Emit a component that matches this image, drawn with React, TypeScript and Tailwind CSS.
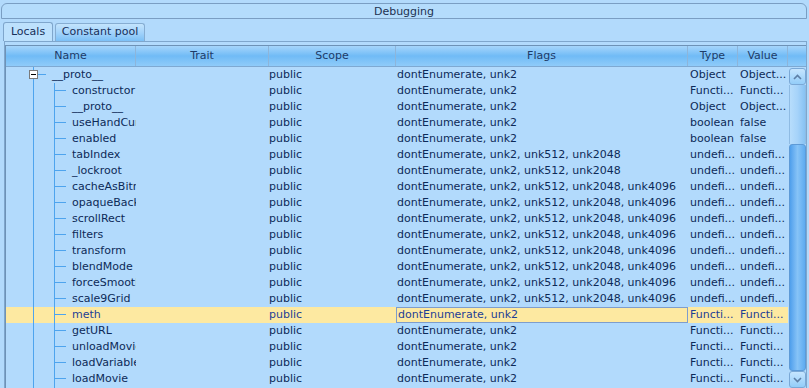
import React from 'react';

type Row = {
    name: string;
    root?: boolean;
    flags: string;
    type: string;
    value: string;
};

const F2 = 'dontEnumerate, unk2';
const F2048 = 'dontEnumerate, unk2, unk512, unk2048';
const F4096 = 'dontEnumerate, unk2, unk512, unk2048, unk4096';

const rows: Row[] = [
    { name: '__proto__', root: true, flags: F2, type: 'Object', value: 'Object...' },
    { name: 'constructor', flags: F2, type: 'Functi...', value: 'Functi...' },
    { name: '__proto__', flags: F2, type: 'Object', value: 'Object...' },
    { name: 'useHandCursor', flags: F2, type: 'boolean', value: 'false' },
    { name: 'enabled', flags: F2, type: 'boolean', value: 'false' },
    { name: 'tabIndex', flags: F2048, type: 'undefi...', value: 'undefi...' },
    { name: '_lockroot', flags: F2048, type: 'undefi...', value: 'undefi...' },
    { name: 'cacheAsBitmap', flags: F4096, type: 'undefi...', value: 'undefi...' },
    { name: 'opaqueBackground', flags: F4096, type: 'undefi...', value: 'undefi...' },
    { name: 'scrollRect', flags: F4096, type: 'undefi...', value: 'undefi...' },
    { name: 'filters', flags: F4096, type: 'undefi...', value: 'undefi...' },
    { name: 'transform', flags: F4096, type: 'undefi...', value: 'undefi...' },
    { name: 'blendMode', flags: F4096, type: 'undefi...', value: 'undefi...' },
    { name: 'forceSmoothing', flags: F4096, type: 'undefi...', value: 'undefi...' },
    { name: 'scale9Grid', flags: F4096, type: 'undefi...', value: 'undefi...' },
    { name: 'meth', flags: F2, type: 'Functi...', value: 'Functi...' },
    { name: 'getURL', flags: F2, type: 'Functi...', value: 'Functi...' },
    { name: 'unloadMovie', flags: F2, type: 'Functi...', value: 'Functi...' },
    { name: 'loadVariables', flags: F2, type: 'Functi...', value: 'Functi...' },
    { name: 'loadMovie', flags: F2, type: 'Functi...', value: 'Functi...' },
    { name: 'loadVariablesNum', flags: F2, type: 'Functi...', value: 'Functi...' },
];

const SELECTED = 15;
const LINE = '#4ea4ee';

function TreeGutter({ root }: { root?: boolean }) {
    // tree lines for the name column, cell starts at x=6
    if (root) {
        return (
            <svg width="46" height="16" className="shrink-0">
                <line x1="27.5" y1="0" x2="27.5" y2="16" stroke={LINE} />
                <line x1="32" y1="7.5" x2="40" y2="7.5" stroke={LINE} />
                <rect x="23.5" y="3.5" width="8" height="8" fill="#ffffff" stroke="#7a7a7a" />
                <line x1="25" y1="7.5" x2="30" y2="7.5" stroke="#000000" />
            </svg>
        );
    }
    return (
        <svg width="66" height="16" className="shrink-0">
            <line x1="27.5" y1="0" x2="27.5" y2="16" stroke={LINE} />
            <line x1="48.5" y1="0" x2="48.5" y2="16" stroke={LINE} />
            <line x1="48" y1="7.5" x2="60" y2="7.5" stroke={LINE} />
        </svg>
    );
}

function HeaderCell({ label, w }: { label: string; w: string }) {
    return (
        <div className={`${w} shrink-0 border-r border-[#8db5da] flex items-center justify-center`}>
            {label}
        </div>
    );
}

export default function App() {
    return (
        <div className="w-[809px] h-[388px] overflow-hidden bg-[#b2dafc] font-['DejaVu_Sans',sans-serif] text-[11px] text-[#0d2a58]">
            {/* Title */}
            <div className="ml-[1px] mr-[2px] mt-[3px] h-[16px] rounded-t-[6px] border border-[#7a9ec3] bg-[#b4dcfc] flex items-center justify-center text-[#1e3352] leading-none">
                Debugging
            </div>

            {/* Tabs */}
            <div className="flex items-end h-[22px] pl-[3px] gap-[2px]">
                <div className="h-[19px] w-[50px] rounded-t-[3px] border border-b-0 border-[#7fa6cc] bg-[#bde1fd] flex items-center justify-center text-[#17305a]">
                    Locals
                </div>
                <div className="h-[18px] w-[90px] rounded-t-[3px] border border-b-0 border-[#86add2] bg-gradient-to-b from-[#c3e4fd] via-[#a3d3fb] to-[#7cc0f6] flex items-center justify-center text-[#17305a]">
                    Constant pool
                </div>
            </div>

            {/* Panel */}
            <div className="ml-[4px] w-[803px] h-[400px] border border-b-0 border-[#7fa6cc] pt-[3px]">
                <div className="border-l border-t border-[#6e92b6] h-full">
                    {/* Header */}
                    <div className="flex h-[21px] border-b border-[#7ea9d2] bg-gradient-to-b from-[#a6d5fb] via-[#70bbf6] to-[#8fcbf9] text-[#1d3b68]">
                        <HeaderCell label="Name" w="w-[130px]" />
                        <HeaderCell label="Trait" w="w-[133px]" />
                        <HeaderCell label="Scope" w="w-[127px]" />
                        <HeaderCell label="Flags" w="w-[292px]" />
                        <HeaderCell label="Type" w="w-[50px]" />
                        <HeaderCell label="Value" w="w-[50px]" />
                        <div className="flex-1" />
                    </div>

                    {/* Body */}
                    <div className="flex">
                        <div className="w-[782px] shrink-0">
                            {rows.map((r, i) => {
                                const sel = i === SELECTED;
                                return (
                                    <div
                                        key={i}
                                        className={`flex h-[16px] leading-[16px] whitespace-nowrap ${sel ? 'bg-[#fde9a1] text-[#1d3f95]' : ''}`}
                                    >
                                        <div className="w-[130px] shrink-0 flex overflow-hidden">
                                            <TreeGutter root={r.root} />
                                            <span>{r.name}</span>
                                        </div>
                                        <div className="w-[133px] shrink-0" />
                                        <div className="w-[127px] shrink-0 overflow-hidden">public</div>
                                        <div className={`w-[292px] shrink-0 overflow-hidden pl-[1px] ${sel ? 'border border-[#7e9dcc] leading-[14px]' : ''}`}>
                                            {r.flags}
                                        </div>
                                        <div className="w-[50px] shrink-0 overflow-hidden pl-[2px]">{r.type}</div>
                                        <div className="w-[50px] shrink-0 overflow-hidden pl-[2px]">{r.value}</div>
                                    </div>
                                );
                            })}
                        </div>

                        {/* Scrollbar */}
                        <div className="w-[18px] shrink-0 flex flex-col pl-[1px] pt-[1px]">
                            <div className="h-[17px] rounded-[3px] border border-[#7aa8d6] bg-gradient-to-b from-[#c6e5fe] to-[#93cdf9] flex items-center justify-center">
                                <svg width="9" height="6" viewBox="0 0 9 6">
                                    <path d="M1 5 L4.5 1.5 L8 5" fill="none" stroke="#5d7fa6" strokeWidth="1.6" />
                                </svg>
                            </div>
                            <div className="h-[59px] border-x border-[#8fbbe3] bg-gradient-to-r from-[#b7ddfc] via-[#a6d3fa] to-[#87c2f3]" />
                            <div className="h-[227px] rounded-[3px] border border-[#5e9ad6] bg-gradient-to-r from-[#4f9fec] via-[#86c3f7] to-[#5eabf0]" />
                            <div className="h-[17px] rounded-[3px] border border-[#7aa8d6] bg-gradient-to-b from-[#c6e5fe] to-[#93cdf9] flex items-center justify-center">
                                <svg width="9" height="6" viewBox="0 0 9 6">
                                    <path d="M1 1 L4.5 4.5 L8 1" fill="none" stroke="#5d7fa6" strokeWidth="1.6" />
                                </svg>
                            </div>
                        </div>
                    </div>
                </div>
            </div>
        </div>
    );
}
